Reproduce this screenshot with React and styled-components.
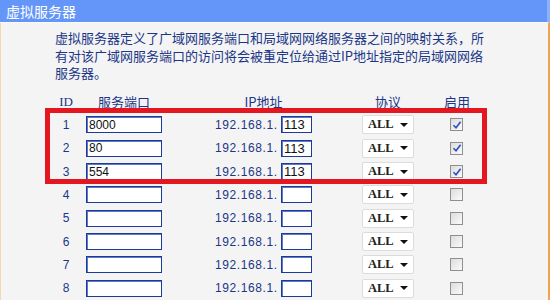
import React from "react";
import styled, { createGlobalStyle } from "styled-components";

const GlobalStyle = createGlobalStyle`
  body {
    margin: 0;
    background: #f4f4f4;
    font-family: "Noto Sans CJK SC", "Liberation Sans", sans-serif;
  }
`;

const Frame = styled.div`
  width: 550px;
  height: 300px;
  display: flex;
  flex-direction: column;
  overflow: hidden;
  background: #f4f4f4;
`;

const TitleBar = styled.div`
  height: 22px;
  flex-shrink: 0;
  display: flex;
  align-items: center;
  padding-left: 6px;
  background: #6396f8;
  border-right: 3px solid #8fb1f8;
  border-bottom: 1px solid #fbfbfb;
  color: #fff;
  font-size: 14px;
`;

const Panel = styled.div`
  flex: 1;
  border-left: 1px solid #f6d6b2;
  border-right: 2px solid #f2a44c;
  padding-left: 54px;
`;

const Intro = styled.p`
  margin: 6px 0 0;
  width: 434px;
  font-size: 13px;
  line-height: 17.5px;
  color: #1b3687;
  white-space: nowrap;
`;

const Table = styled.div`
  position: relative;
  margin: 8.5px 0 0 -7px;
  width: 440px;
`;

const Row = styled.div`
  display: grid;
  grid-template-columns: 36px 129px 147px 88px 40px;
  align-items: center;
  height: 23.33px;
`;

const HeadCell = styled.div`
  width: ${(p) => p.$w}px;
  margin-left: ${(p) => p.$ml || 0}px;
  text-align: center;
  font-size: 13px;
  color: #1b3687;
  white-space: nowrap;
  font-family: ${(p) =>
    p.$serif ? '"Liberation Serif", serif' : '"Noto Sans CJK SC", sans-serif'};
`;

const IdCell = styled.div`
  text-align: center;
  font-family: "Liberation Sans", sans-serif;
  font-size: 12px;
  color: #1b3687;
`;

const TextBox = styled.div`
  box-sizing: border-box;
  width: ${(p) => p.$w}px;
  height: 17px;
  margin-left: ${(p) => p.$ml || 0}px;
  padding-left: 2px;
  display: flex;
  align-items: center;
  background: #fff;
  border: 1px solid #1c3a9a;
  box-shadow: inset 1px 1px 0 #5d78c4;
  font-family: "Liberation Sans", sans-serif;
  font-size: ${(p) => p.$fs || 12}px;
  color: #111;
`;

const IpGroup = styled.div`
  display: flex;
  align-items: center;
  padding-left: 2px;
`;

const IpText = styled.span`
  font-family: "Liberation Sans", sans-serif;
  font-size: 12px;
  letter-spacing: 0.6px;
  color: #1b3687;
  width: 66px;
`;

const Select = styled.div`
  box-sizing: border-box;
  width: 52px;
  height: 19px;
  margin-left: 2px;
  display: flex;
  align-items: center;
  justify-content: space-between;
  padding: 0 5px 0 5px;
  background: #fff;
  border: 1px solid #dcdcdc;
  border-radius: 2px;
  font-family: "Liberation Serif", serif;
  font-size: 12.5px;
  font-weight: bold;
  color: #222;
`;

const Caret = styled.span`
  width: 0;
  height: 0;
  border-left: 4px solid transparent;
  border-right: 4px solid transparent;
  border-top: 4px solid #111;
`;

const Check = styled.span`
  box-sizing: border-box;
  width: 13px;
  height: 13px;
  margin-left: 2px;
  display: flex;
  align-items: center;
  justify-content: center;
  border: 1px solid #8f8f8f;
  background: linear-gradient(135deg, #dcdcdc, #fbfbfb);
`;

const Highlight = styled.div`
  position: absolute;
  left: -3px;
  top: 18px;
  width: 442px;
  height: 76px;
  box-sizing: border-box;
  border: 5px solid #e4161f;
  pointer-events: none;
`;

const rows = [
  { id: 1, port: "8000", ip: "113", on: true },
  { id: 2, port: "80", ip: "113", on: true },
  { id: 3, port: "554", ip: "113", on: true },
  { id: 4, port: "", ip: "", on: false },
  { id: 5, port: "", ip: "", on: false },
  { id: 6, port: "", ip: "", on: false },
  { id: 7, port: "", ip: "", on: false },
  { id: 8, port: "", ip: "", on: false },
];

const Tick = () => (
  <svg width="10" height="10" viewBox="0 0 10 10">
    <path d="M1.5 5.2 L4 7.8 L8.6 1.8" fill="none" stroke="#2b4fc0" strokeWidth="1.6" />
  </svg>
);

const App = () => (
  <Frame>
    <GlobalStyle />
    <TitleBar>虚拟服务器</TitleBar>
    <Panel>
      <Intro>
        虚拟服务器定义了广域网服务端口和局域网网络服务器之间的映射关系，所
        <br />
        有对该广域网服务端口的访问将会被重定位给通过IP地址指定的局域网网络
        <br />
        服务器。
      </Intro>
      <Table>
        <Row>
          <HeadCell $w={36} $serif>ID</HeadCell>
          <HeadCell $w={76} $ml={2}>服务端口</HeadCell>
          <HeadCell $w={97} $ml={2}>IP地址</HeadCell>
          <HeadCell $w={52} $ml={2}>协议</HeadCell>
          <HeadCell $w={40} $ml={-11}>启用</HeadCell>
        </Row>
        {rows.map((r) => (
          <Row key={r.id}>
            <IdCell>{r.id}</IdCell>
            <TextBox $w={76} $ml={2}>{r.port}</TextBox>
            <IpGroup>
              <IpText>192.168.1.</IpText>
              <TextBox $w={31} $fs={13}>{r.ip}</TextBox>
            </IpGroup>
            <Select>
              ALL
              <Caret />
            </Select>
            <Check>{r.on && <Tick />}</Check>
          </Row>
        ))}
        <Highlight />
      </Table>
    </Panel>
  </Frame>
);

export default App;
